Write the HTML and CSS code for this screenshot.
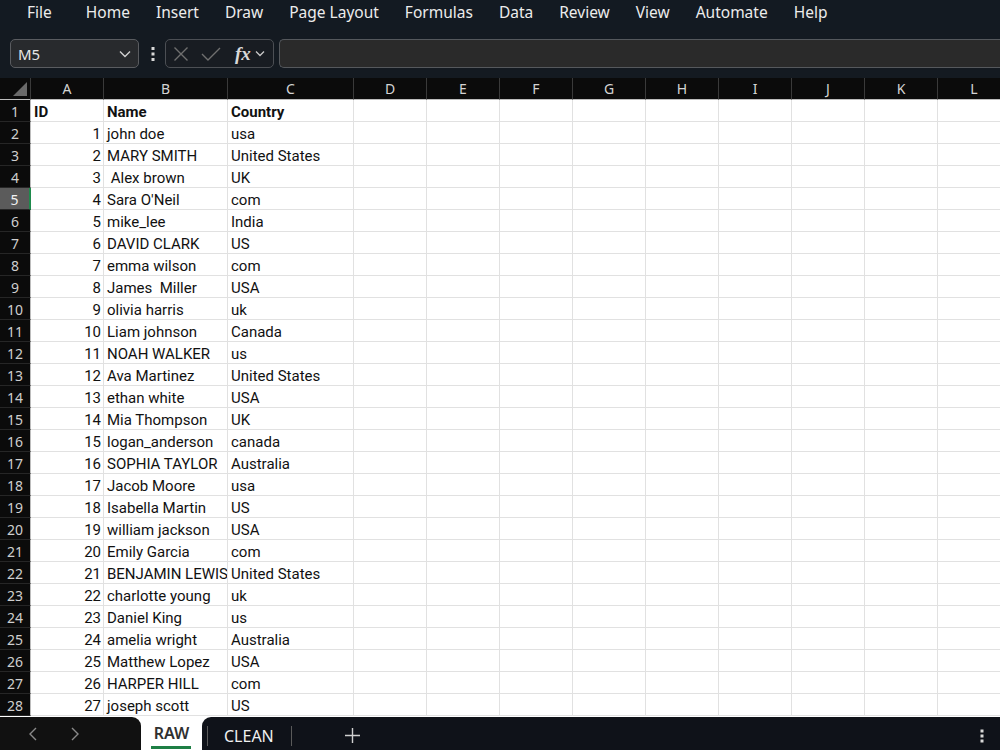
FILE: index.html
```html
<!DOCTYPE html>
<html lang="en">
<head>
    <meta charset="UTF-8">
    <title>Book1 - Excel</title>
    <link rel="stylesheet" href="styles.css">
</head>
<body>
    <div class="menu-bar">
        <span class="menu-item menu-file">File</span>
        <span class="menu-item">Home</span>
        <span class="menu-item">Insert</span>
        <span class="menu-item">Draw</span>
        <span class="menu-item">Page Layout</span>
        <span class="menu-item">Formulas</span>
        <span class="menu-item">Data</span>
        <span class="menu-item">Review</span>
        <span class="menu-item">View</span>
        <span class="menu-item">Automate</span>
        <span class="menu-item">Help</span>
    </div>

    <div class="formula-bar">
        <div class="name-box">
            <span>M5</span>
            <svg class="chevron" width="12" height="8" viewBox="0 0 12 8"><polyline points="1,1.5 6,6.5 11,1.5" fill="none" stroke="#d0d0d0" stroke-width="1.4"/></svg>
        </div>
        <svg class="more-dots" width="4" height="16" viewBox="0 0 4 16"><rect x="0.5" y="1" width="3" height="3" fill="#d8d8d8"/><rect x="0.5" y="6.5" width="3" height="3" fill="#d8d8d8"/><rect x="0.5" y="12" width="3" height="3" fill="#d8d8d8"/></svg>
        <div class="fx-buttons">
            <svg class="fx-cancel" width="16" height="16" viewBox="0 0 16 16"><path d="M1.5 1.5 L14.5 14.5 M14.5 1.5 L1.5 14.5" stroke="#6f6f6f" stroke-width="1.4"/></svg>
            <svg class="fx-enter" width="20" height="16" viewBox="0 0 20 16"><polyline points="1,8 7,14 19,2" fill="none" stroke="#6f6f6f" stroke-width="1.4"/></svg>
            <span class="fx">fx</span>
            <svg class="fx-chevron" width="10" height="7" viewBox="0 0 10 7"><polyline points="1,1.5 5,5.5 9,1.5" fill="none" stroke="#c8c8c8" stroke-width="1.3"/></svg>
        </div>
        <div class="formula-input"></div>
    </div>

    <div class="sheet">
        <div class="row col-head">
            <div class="cell c-h corner">
                <svg width="14" height="14" viewBox="0 0 14 14"><polygon points="14,0 14,14 0,14" fill="#6a6a6a"/></svg>
            </div>
        </div>
        <div id="rows"></div>
    </div>

    <div class="tab-bar">
        <div class="tab-nav">
            <svg width="8" height="14" viewBox="0 0 8 14"><polyline points="7,1 1,7 7,13" fill="none" stroke="#8a8a8a" stroke-width="1.4"/></svg>
            <svg width="8" height="14" viewBox="0 0 8 14"><polyline points="1,1 7,7 1,13" fill="none" stroke="#8a8a8a" stroke-width="1.4"/></svg>
        </div>
        <div class="tab active">RAW</div>
        <div class="tab-rest">
            <span class="tab-sep"></span>
            <span class="tab">CLEAN</span>
            <span class="tab-sep"></span>
            <svg class="add-sheet" width="15" height="15" viewBox="0 0 15 15"><path d="M7.5 0 V15 M0 7.5 H15" stroke="#d0d0d0" stroke-width="1.4"/></svg>
            <svg class="tab-more" width="4" height="14" viewBox="0 0 4 14"><rect x="0.5" y="0.5" width="3" height="3" fill="#d8d8d8"/><rect x="0.5" y="5.5" width="3" height="3" fill="#d8d8d8"/><rect x="0.5" y="10.5" width="3" height="3" fill="#d8d8d8"/></svg>
        </div>
    </div>

    <script>
        const letters = ['A', 'B', 'C', 'D', 'E', 'F', 'G', 'H', 'I', 'J', 'K', 'L'];
        const widths = { A: 'c-a', B: 'c-b', C: 'c-c' };

        const people = [
            ['john doe', 'usa'],
            ['MARY SMITH', 'United States'],
            [' Alex brown', 'UK'],
            ["Sara O'Neil", 'com'],
            ['mike_lee', 'India'],
            ['DAVID CLARK', 'US'],
            ['emma wilson', 'com'],
            ['James  Miller', 'USA'],
            ['olivia harris', 'uk'],
            ['Liam johnson', 'Canada'],
            ['NOAH WALKER', 'us'],
            ['Ava Martinez', 'United States'],
            ['ethan white', 'USA'],
            ['Mia Thompson', 'UK'],
            ['logan_anderson', 'canada'],
            ['SOPHIA TAYLOR', 'Australia'],
            ['Jacob Moore', 'usa'],
            ['Isabella Martin', 'US'],
            ['william jackson', 'USA'],
            ['Emily Garcia', 'com'],
            ['BENJAMIN LEWIS', 'United States'],
            ['charlotte young', 'uk'],
            ['Daniel King', 'us'],
            ['amelia wright', 'Australia'],
            ['Matthew Lopez', 'USA'],
            ['HARPER HILL', 'com'],
            ['joseph scott', 'US']
        ];

        function makeCell(cls, text) {
            const cell = document.createElement('div');
            cell.className = 'cell ' + cls;
            cell.textContent = text || '';
            return cell;
        }

        // Column headers
        const head = document.querySelector('.col-head');
        letters.forEach(l => head.appendChild(makeCell(widths[l] || 'c-x', l)));

        // Data rows (row 1 is the header line)
        const rowsEl = document.getElementById('rows');
        const data = [['ID', 'Name', 'Country']].concat(people.map((p, i) => [String(i + 1), p[0], p[1]]));

        data.forEach((values, r) => {
            const row = document.createElement('div');
            row.className = 'row';
            const num = makeCell('c-h row-num', String(r + 1));
            if (r === 4) num.classList.add('selected');
            row.appendChild(num);

            letters.forEach((l, i) => {
                const cell = makeCell(widths[l] || 'c-x', values[i]);
                if (r === 0 && i < 3) cell.classList.add('bold');
                if (r > 0 && i === 0) cell.classList.add('num');
                row.appendChild(cell);
            });
            rowsEl.appendChild(row);
        });
    </script>
</body>
</html>
```

FILE: styles.css
```css
* {
    margin: 0;
    padding: 0;
    box-sizing: border-box;
}

body {
    width: 1000px;
    height: 750px;
    overflow: hidden;
    background-color: #131a22;
    font-family: "Noto Sans", "Open Sans", sans-serif;
    display: flex;
    flex-direction: column;
}

/* Top menu */
.menu-bar {
    height: 30px;
    display: flex;
    align-items: center;
    gap: 26px;
    padding-left: 27px;
    padding-bottom: 6px;
    background-color: #131a22;
    color: #ececec;
    font-size: 15.5px;
    flex: none;
}

.menu-file {
    margin-right: 8px;
}

/* Name box + formula input */
.formula-bar {
    height: 48px;
    display: flex;
    align-items: flex-start;
    padding: 9px 0 0 10px;
    background-color: #141a21;
    flex: none;
}

.name-box {
    width: 129px;
    height: 29px;
    display: flex;
    align-items: center;
    justify-content: space-between;
    padding: 0 7px 0 7px;
    background-color: #282a2d;
    border: 1px solid #5a5c60;
    border-radius: 5px;
    color: #e6e6e6;
    font-size: 15px;
}

.more-dots {
    margin: 7px 10px 0 12px;
}

.fx-buttons {
    width: 109px;
    height: 29px;
    display: flex;
    align-items: center;
    padding-left: 7px;
    border: 1px solid #4c4f54;
    border-radius: 5px;
    background-color: #181c22;
}

.fx-enter {
    margin-left: 12px;
}

.fx {
    font-family: "Liberation Serif", "DejaVu Serif", serif;
    font-style: italic;
    font-weight: bold;
    font-size: 19px;
    color: #d8d8d8;
    margin-left: 14px;
    line-height: 1;
}

.fx-chevron {
    margin-left: 4px;
}

.formula-input {
    flex: 1;
    height: 29px;
    margin-left: 5px;
    background-color: #2a2a2a;
    border: 1px solid #55585c;
    border-right: none;
    border-radius: 5px 0 0 5px;
}

/* Grid */
.sheet {
    height: 639px;
    overflow: hidden;
    background-color: #ffffff;
    flex: none;
}

.row {
    display: flex;
    height: 22px;
}

.cell {
    flex: none;
    height: 22px;
    padding: 0 3px;
    border-right: 1px solid #e1e1e1;
    border-bottom: 1px solid #e1e1e1;
    font-family: Roboto, "Liberation Sans", sans-serif;
    font-size: 15px;
    line-height: 25px;
    color: #111111;
    white-space: pre;
    overflow: hidden;
}

.c-h { width: 31px; }
.c-a { width: 73px; }
.c-b { width: 124px; }
.c-c { width: 126px; }
.c-x { width: 73px; }

.bold {
    font-weight: bold;
}

.num {
    text-align: right;
    padding-right: 2px;
}

.col-head .cell {
    background-color: #0b0b0b;
    color: #d4d4d4;
    text-align: center;
    font-family: "Noto Sans", "Open Sans", sans-serif;
    font-size: 14px;
    line-height: 22px;
    border-right: 1px solid #3a3a3a;
    border-bottom: 1px solid #bdbdbd;
}

.col-head .corner {
    display: flex;
    align-items: flex-end;
    justify-content: flex-end;
    padding: 0 3px 3px 0;
}

.row-num {
    background-color: #0b0b0b;
    color: #cfcfcf;
    text-align: center;
    padding: 0;
    font-family: "Noto Sans", "Open Sans", sans-serif;
    font-size: 14px;
    line-height: 24px;
    border-right: 1px solid #bdbdbd;
    border-bottom: 1px solid #262626;
}

.row-num.selected {
    background-color: #5b5b5b;
    color: #f2f2f2;
    border-right: 2px solid #1e8a4c;
}

/* Sheet tabs */
.tab-bar {
    flex: 1;
    display: flex;
    background-color: #ffffff;
    font-family: "Noto Sans", "Open Sans", sans-serif;
    font-size: 16px;
}

.tab-nav {
    width: 141px;
    display: flex;
    align-items: center;
    gap: 34px;
    padding-left: 29px;
    background-color: #111111;
    border-top-right-radius: 9px;
}

.tab {
    color: #f0f0f0;
}

.tab.active {
    width: 61px;
    display: flex;
    align-items: center;
    justify-content: center;
    color: #303030;
    font-weight: 600;
    padding-bottom: 2px;
    position: relative;
}

.tab.active::after {
    content: "";
    position: absolute;
    left: 10px;
    right: 11px;
    bottom: 1px;
    height: 3px;
    background-color: #1e7f45;
}

.tab-rest {
    flex: 1;
    display: flex;
    align-items: center;
    background-color: #0f1219;
    border-top-left-radius: 9px;
    padding-top: 4px;
}

.tab-sep {
    width: 1px;
    height: 20px;
    background-color: #5a5a5a;
}

.tab-rest .tab-sep:first-child {
    margin-left: 5px;
    margin-right: 16px;
}

.tab-rest .tab + .tab-sep {
    margin-left: 17px;
}

.add-sheet {
    margin-left: 53px;
}

.tab-more {
    margin-left: auto;
    margin-right: 16px;
}
```
